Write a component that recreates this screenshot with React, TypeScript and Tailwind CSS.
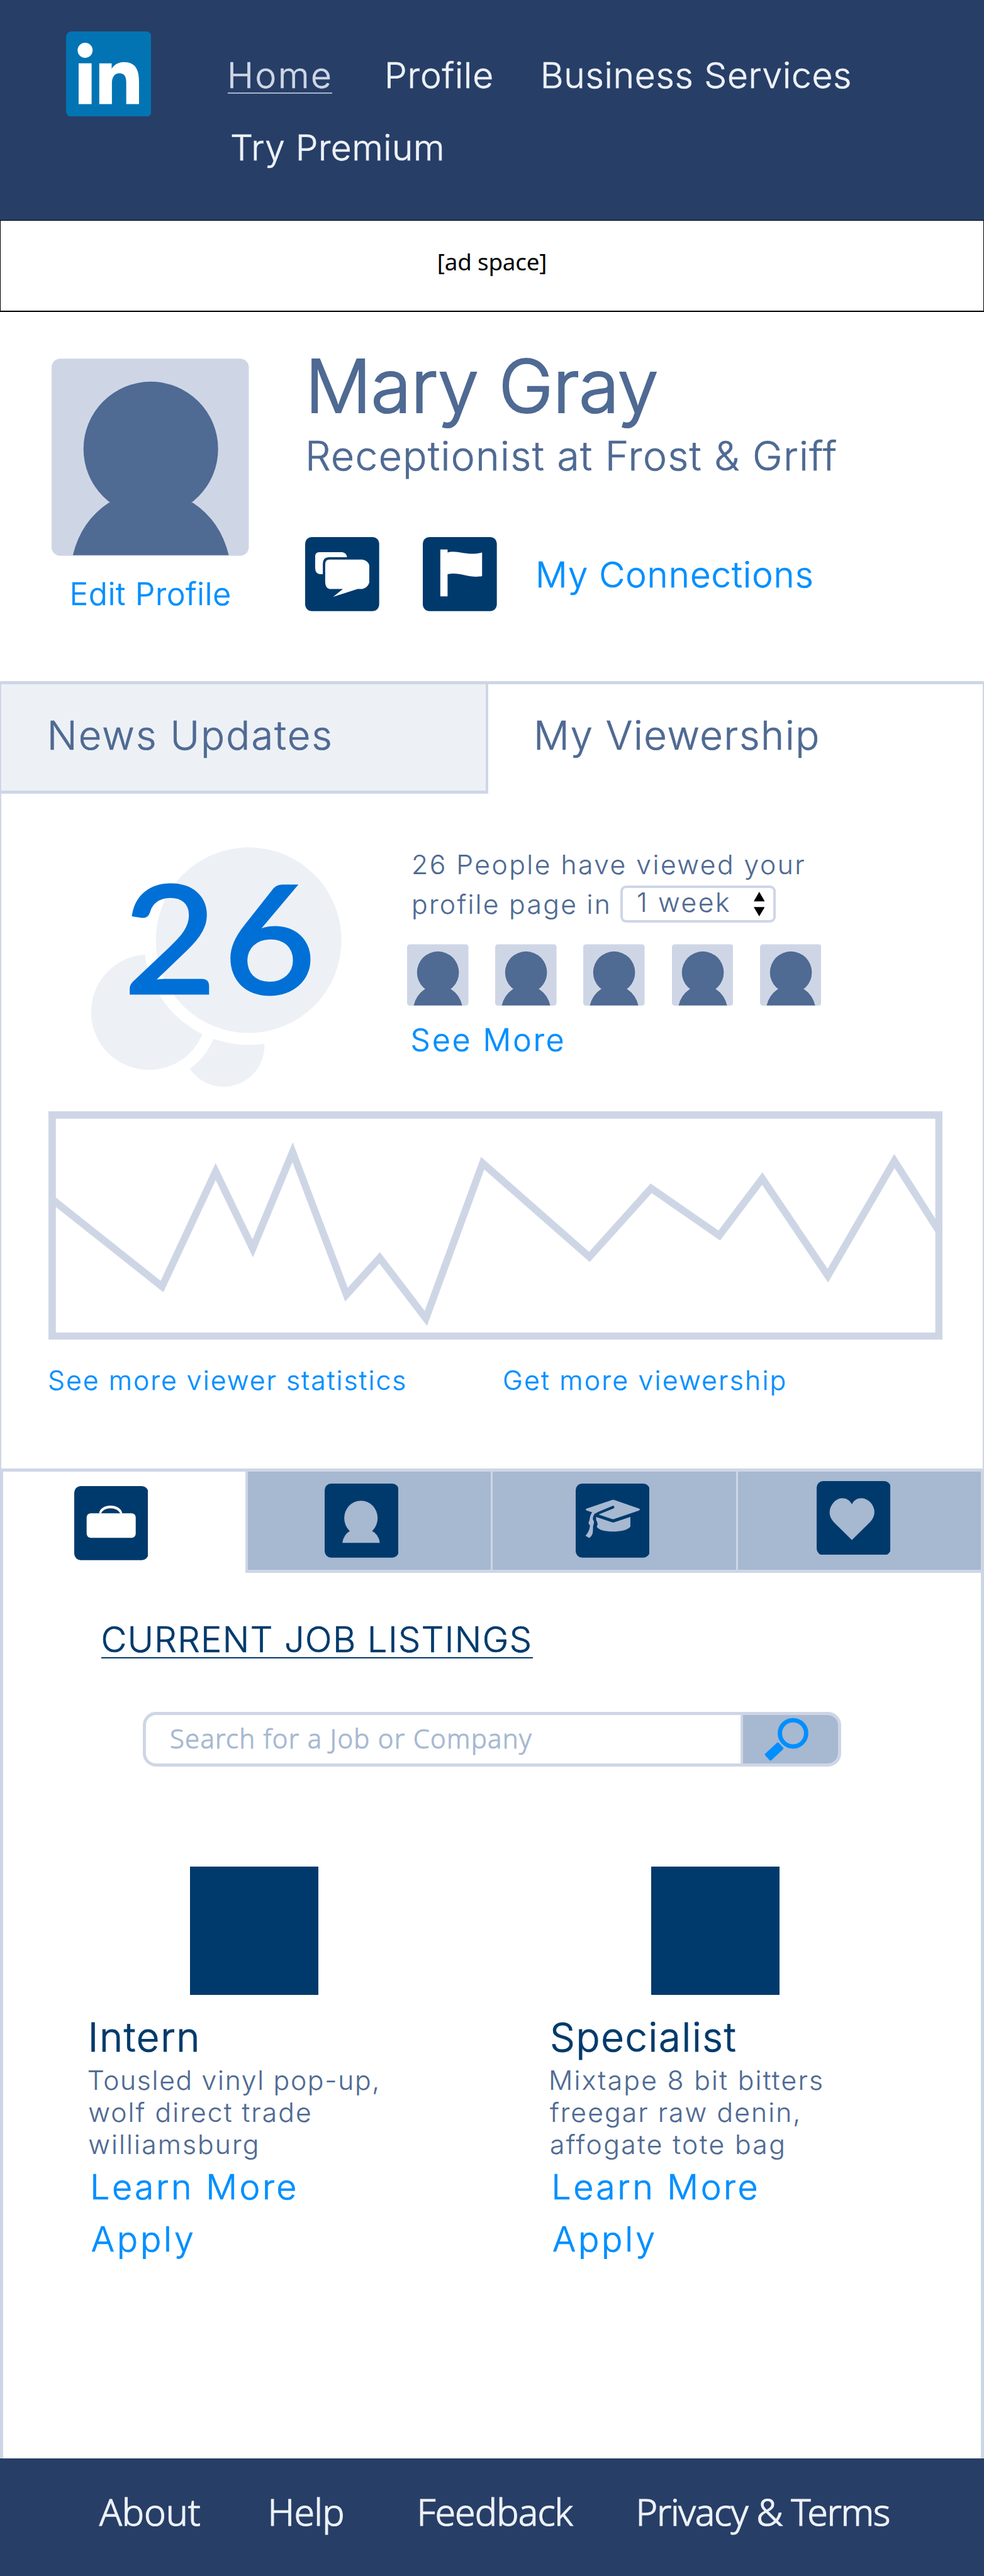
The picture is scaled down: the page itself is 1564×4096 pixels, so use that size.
import React from "react";

const LIGHT = "font-light [-webkit-text-stroke:0.7px]";

function LinkedInLogo() {
  return (
    <svg viewBox="0 0 144.7 144.7" className="h-[135.7px] w-[135.7px] shrink-0">
      <rect width="144.7" height="144.7" rx="9" fill="#0274b3" />
      <circle cx="32.3" cy="32" r="12.7" fill="#fff" />
      <rect x="21.3" y="54" width="22" height="69.2" fill="#fff" />
      <path
        d="M56.3 54H77.3V63.5C80.5 57.5 87.5 52 98 52C118 52 123.7 65 123.7 86V123.2H102V87C102 78 100 71 90.5 71S78 79 77.7 87V123.2H56.3Z"
        fill="#fff"
      />
    </svg>
  );
}

function Avatar({ className }: { className: string }) {
  return (
    <svg viewBox="0 0 334 334" className={className}>
      <rect width="334" height="334" rx="15" fill="#ced6e6" />
      <circle cx="168" cy="153" r="114" fill="#4f6a93" />
      <path d="M36 333Q50 275 97 244H239Q286 275 300 333Z" fill="#4f6a93" />
    </svg>
  );
}

function IconBox({ children, className = "" }: { children: React.ReactNode; className?: string }) {
  return (
    <svg viewBox="0 0 125.5 125.5" className={`h-[117.7px] w-[117.7px] shrink-0 ${className}`}>
      <rect width="125.5" height="125.5" rx="11" fill="#003a6c" />
      {children}
    </svg>
  );
}

function ChatIcon() {
  return (
    <IconBox>
      <g fill="#fff">
        <path d="M24 25.7H63Q70 27 71 34H40Q30 34.500 30 45V63H25Q17 62 17 52V33Q17 25.700 24 25.700Z" />
        <path d="M41 38H97Q107 40 108.700 48V77Q106 86 97 88H89L47.500 101.300L64 88H41Q34 86 34 76V46Q34 38 41 38Z" />
      </g>
    </IconBox>
  );
}

function FlagIcon() {
  return (
    <IconBox className="ml-[69.7px]">
      <path d="M29.700 21H42V26C58 21 76 33 100.500 26V66C80 71 62 58 42 63V100.500H29.700Z" fill="#fff" />
    </IconBox>
  );
}

function Tabs() {
  const cell = "h-full flex border-[#ced6e6] border-b-[5px] bg-[#a7b8d1]";
  return (
    <div className="flex h-[161px]">
      <div className="w-[384.500px] pl-[112.500px] pt-[23px]">
        <IconBox>
          <rect x="21" y="46" width="83.200" height="41.700" rx="7" fill="#fff" />
          <path d="M42 46.500C44 28.500 79 28.500 81.500 46.500H78C73 34.500 50 34.500 45.500 46.500Z" fill="#fff" />
        </IconBox>
      </div>
      <div className={`${cell} w-[390.500px] border-l-4 pl-[122px] pt-[18.700px]`}>
        <IconBox>
          <g fill="#a7b8d1">
            <ellipse cx="61.500" cy="58.500" rx="28.300" ry="29.500" />
            <path d="M30 100.500Q32 86 45 79H78Q92 86 93.500 100.500Z" />
          </g>
        </IconBox>
      </div>
      <div className={`${cell} w-[390px] border-l-[3px] pl-[131.800px] pt-[18.700px]`}>
        <IconBox>
          <path d="M61 28Q63.300 26.800 66 28L107.500 42.300Q110 44 107.500 45.700L66 59.700Q63.300 61 60.500 59.700L18.500 45.700Q15.500 44 18.500 42.300Z" fill="#a7b8d1" />
          <path d="M63.300 40L39 50Q31 53 31 64" fill="none" stroke="#003a6c" strokeWidth="4.500" strokeLinecap="round" />
          <path d="M34.500 56.500L60 65Q63.300 66.500 67 65L92.700 56.500V73C88 79 76 81.300 63.300 81.300S39 79 35.700 73Q38 69 36.500 65.500Q34 62 34.500 56.500Z" fill="#a7b8d1" />
          <path d="M28 48.500L33 50Q28.500 55 29.300 61Q32.500 65 30 70Q29 73 29.300 79Q29.500 88 23 92.300L16.700 88.500Q23.500 81 24.300 71Q20 67 23.500 62Q24 54 28 48.500Z" fill="#a7b8d1" />
        </IconBox>
      </div>
      <div className={`${cell} flex-1 border-l-[3px] pl-[124.500px] pt-[14.600px]`}>
        <IconBox>
          <path d="M59.700 39.400C54 27 38 26 30 35C20 45 19 59 29 69.500L59.700 100L90.500 69.500C101 59 100 45 90 35C81 26 65 27 59.700 39.400Z" fill="#a7b8d1" />
        </IconBox>
      </div>
    </div>
  );
}

const points: [number, number][] = [
  [86, 2030], [274.3, 2179.5], [365.2, 1984.7], [428, 2114.8], [495.5, 1951.8], [586.8, 2193.2],
  [643, 2130.9], [721.3, 2233.4], [817.5, 1970.5], [998.3, 2129.3], [1103, 2013], [1218.4, 2093],
  [1291.2, 1996.6], [1402.3, 2161], [1515, 1966.7], [1591.5, 2087],
];

function Chart() {
  return (
    <svg viewBox="81.9 1882.5 1515 387.5" className="h-[363.6px] w-[1421.4px]">
      <rect x="88.200" y="1888.800" width="1502.400" height="374.900" fill="none" stroke="#ced6e6" strokeWidth="12.600" />
      <polyline points={points.map((p) => p.join(",")).join(" ")} fill="none" stroke="#ced6e6" strokeWidth="12.400" strokeMiterlimit="10" />
    </svg>
  );
}

function Job({ title, titleClass, lines }: { title: string; titleClass: string; lines: [string, string][] }) {
  return (
    <article className="w-[733.2px] shrink-0 leading-[1.064] whitespace-nowrap">
      <div className="ml-[161.500px] h-[204px] w-[204px] bg-[#003a6c]" />
      <h3 className={`mt-[33.600px] h-[63.900px] text-[63.200px] font-light text-[#003a6c] [-webkit-text-stroke:1px] ${titleClass}`}>{title}</h3>
      <p className="mt-[14px] text-[42.600px] leading-[50.9px] font-light text-[#4f6a93] [-webkit-text-stroke:0.2px]">
        {lines.map(([text, cls]) => (
          <span key={text} className={`block ${cls}`}>{text}</span>
        ))}
      </p>
      <a className={`mt-[11.500px] ml-[2.500px] block h-[56px] text-[55.400px] tracking-[3.5px] text-[#008fff] ${LIGHT}`}>Learn More</a>
      <a className={`mt-[27.500px] ml-[4px] block h-[56px] text-[55.400px] tracking-[3.8px] text-[#008fff] ${LIGHT}`}>Apply</a>
    </article>
  );
}

export default function App() {
  return (
    <div className="flex h-[4096px] w-[1564px] flex-col overflow-hidden bg-white font-['Inter',sans-serif] whitespace-nowrap">
      <header className="flex h-[350px] shrink-0 bg-[#273e67] pt-[49.500px] pl-[104.700px] text-[56.800px] leading-[1.064] text-[#edf1f6]">
        <LinkedInLogo />
        <nav className={`pt-[40.200px] pl-[121.600px] ${LIGHT}`}>
          <div className="flex h-[60px] items-start">
            <a className="h-[59.500px] w-[166px] border-b-2 border-[#a9b4c9] indent-[-1px] tracking-[2.600px] text-[#ced6e6]">Home</a>
            <a className="ml-[83px] w-[247.700px] tracking-[0.900px]">Profile</a>
            <a className="tracking-[0.750px]">Business Services</a>
          </div>
          <a className="mt-[55.200px] ml-[4px] block tracking-[0.500px]">Try Premium</a>
        </nav>
      </header>

      <div className="h-[146px] shrink-0 border border-b-2 border-black pt-[47px] text-center font-['Noto_Sans',sans-serif] text-[36.800px] leading-none tracking-[-0.2px] text-black">
        [ad space]
      </div>

      <section className="flex h-[586.700px] shrink-0 leading-[1.064] text-[#4f6a93]">
        <div className="w-[485px] shrink-0 pt-[73.500px] pl-[82px]">
          <Avatar className="h-[314px] w-[313.500px]" />
          <a className={`mt-[34px] ml-[28.500px] block text-[49.700px] tracking-[0.900px] text-[#008fff] ${LIGHT}`}>Edit Profile</a>
        </div>
        <div className="pt-[55.600px]">
          <h1 className="h-[117.600px] text-[117px] font-light tracking-[-0.800px] [-webkit-text-stroke:2.2px]">Mary Gray</h1>
          <p className={`mt-[22px] h-[63.900px] text-[64px] tracking-[1.350px] ${LIGHT}`}>Receptionist at Frost &amp; Griff</p>
          <div className="mt-[99px] flex">
            <ChatIcon />
            <FlagIcon />
            <a className={`mt-[31px] ml-[61px] text-[56.200px] tracking-[1.100px] text-[#008fff] ${LIGHT}`}>My Connections</a>
          </div>
        </div>
      </section>

      <section className="h-[1252.500px] shrink-0 border-x-2 border-t-[5px] border-[#ced6e6] leading-[1.064] text-[#4f6a93]">
        <div className={`flex h-[174px] text-[63.200px] ${LIGHT}`}>
          <a className="w-[774px] border-r-4 border-b-[5px] border-[#ced6e6] bg-[#edf1f6] pt-[48.500px] pl-[72.700px] tracking-[2.100px]">News Updates</a>
          <a className="pt-[48.500px] pl-[72px] tracking-[1.600px]">My Viewership</a>
        </div>
        <div className="flex h-[505px]">
          <div className="relative w-[643.500px] shrink-0 pt-[80px] pl-[138.700px]">
            <svg viewBox="150 1430 435 416" className="h-[390.300px] w-[408.100px]">
              <circle cx="378.500" cy="1772" r="69.300" fill="#edf1f6" />
              <circle cx="252" cy="1715" r="118.500" fill="#fff" />
              <circle cx="252" cy="1715" r="98" fill="#edf1f6" />
              <circle cx="421" cy="1593" r="177.600" fill="#fff" />
              <circle cx="421" cy="1593" r="157.300" fill="#edf1f6" />
            </svg>
            <span className="absolute top-[108.500px] left-[195px] origin-left scale-x-[1.07] font-['Lato',sans-serif] text-[236px] leading-none tracking-[11px] text-[#0070d7] [-webkit-text-stroke:5px] [stroke-linejoin:round]">26</span>
          </div>
          <div>
            <div className="mt-[90.500px] ml-[8.500px] text-[42.600px] font-light tracking-[2.500px] [-webkit-text-stroke:0.2px]">
              <p className="h-[43px]">26 People have viewed your</p>
              <div className="mt-[13px] flex items-start">
                <span className="w-[332px] pt-[6.500px] tracking-[2.300px]">profile page in</span>
                <div className="flex h-[59px] w-[247px] justify-between rounded-[9px] border-4 border-[#ced6e6] pt-px pr-[14px] pl-[22px] tracking-[2.600px]">
                  <span className="-mt-[1px]">1 week</span>
                  <svg viewBox="0 0 18 40" className="mt-[5px] h-[39px] w-[17.500px]">
                    <path d="M9 0L18 15.500H0ZM9 40L18 25H0Z" fill="#000" />
                  </svg>
                </div>
              </div>
            </div>
            <div className="mt-[34px] ml-[1.500px] flex gap-[42.600px]">
              {[0, 1, 2, 3, 4].map((i) => (
                <Avatar key={i} className="h-[98.500px] w-[97.600px]" />
              ))}
            </div>
            <a className={`mt-[27px] ml-[7px] block text-[49.700px] tracking-[3px] text-[#008fff] ${LIGHT}`}>See More</a>
          </div>
        </div>
        <div className="pl-[75px]">
          <Chart />
          <div className="mt-[42px] flex text-[42.600px] font-light text-[#008fff] [-webkit-text-stroke:0.4px]">
            <a className="-ml-px w-[723px] tracking-[2.100px]">See more viewer statistics</a>
            <a className="tracking-[2.300px]">Get more viewership</a>
          </div>
        </div>
      </section>

      <main className="min-h-0 flex-1 border-x-[5px] border-t-[5px] border-[#ced6e6]">
        <Tabs />
        <h2 className={`mt-[76.600px] ml-[155.500px] h-[59.500px] w-[686px] border-b-2 border-[#003a6c] text-[56px] leading-[1.064] tracking-[1.400px] text-[#003a6c] ${LIGHT}`}>
          CURRENT JOB LISTINGS
        </h2>
        <div className="mt-[85px] ml-[222.400px] flex h-[87px] w-[1109.200px] overflow-hidden rounded-[21px] border-[5px] border-[#ced6e6]">
          <div className="w-[945px] pt-[16px] pl-[37.500px] font-['Noto_Sans',sans-serif] text-[41.800px] leading-none font-light tracking-[1.300px] text-[#a7b8d1] [-webkit-text-stroke:0.9px]">
            Search for a Job or Company
          </div>
          <div className="flex-1 border-l-4 border-[#ced6e6] bg-[#a7b8d1]">
            <svg viewBox="1259 2906 160 82" className="h-[77px] w-[150.100px]">
              <circle cx="1343.700" cy="2937" r="22.300" fill="none" stroke="#008fff" strokeWidth="7.400" />
              <path d="M1318 2955L1325 2962.500L1305.500 2980.500L1298.500 2973Z" fill="#008fff" stroke="#008fff" strokeWidth="5" strokeLinejoin="round" />
            </svg>
          </div>
        </div>
        <div className="mt-[158.700px] flex pl-[135.700px]">
          <Job
            title="Intern"
            titleClass="tracking-[1.7px] -ml-[1px]"
            lines={[
              ["Tousled vinyl pop-up,", "tracking-[1.7px] -ml-[2px]"],
              ["wolf direct trade", "tracking-[2.1px] -ml-[0.500px]"],
              ["williamsburg", "tracking-[2.1px] -ml-[0.500px]"],
            ]}
          />
          <Job
            title="Specialist"
            titleClass="tracking-[1.7px]"
            lines={[
              ["Mixtape 8 bit bitters", "tracking-[2.3px] -ml-[2px]"],
              ["freegar raw denin,", "tracking-[2.1px]"],
              ["affogate tote bag", "tracking-[2.4px]"],
            ]}
          />
        </div>
      </main>

      <footer className="flex h-[187.500px] shrink-0 bg-[#273e67] pt-[55.500px] pl-[158px] font-['Noto_Sans',sans-serif] text-[59px] leading-none font-light text-[#edf1f6] [-webkit-text-stroke:1.2px]">
        <a className="w-[267.500px] tracking-[-0.1px]">About</a>
        <a className="w-[237px] tracking-[-0.8px]">Help</a>
        <a className="w-[348px] tracking-[-0.9px]">Feedback</a>
        <a className="tracking-[-1.3px]">Privacy &amp; Terms</a>
      </footer>
    </div>
  );
}
